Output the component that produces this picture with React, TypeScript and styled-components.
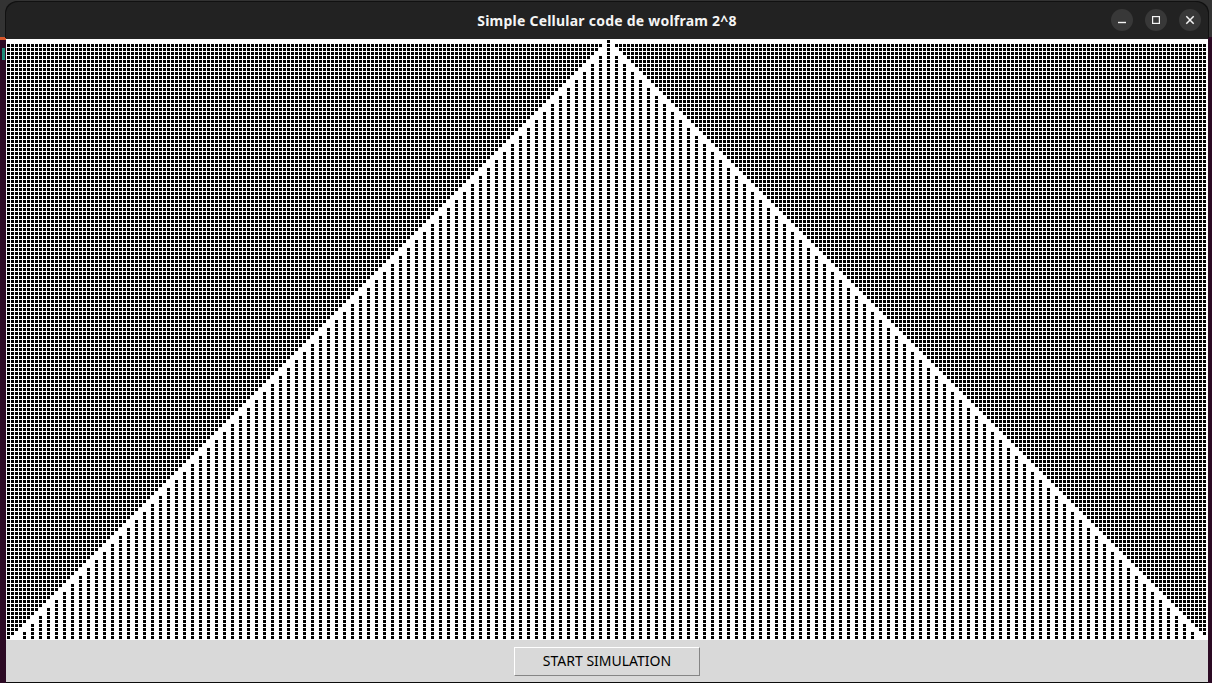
import { useMemo } from 'react'
import styled, { createGlobalStyle } from 'styled-components'

const COLS = 300
const ROWS = 150
const CENTER = 150
const PITCH = 4
const CELL = 3

const GlobalStyle = createGlobalStyle`
  html,
  body {
    width: 1212px;
    height: 683px;
    margin: 0;
    overflow: hidden;
    background: #2c0a24;
  }
`

const Desktop = styled.div`
  display: flex;
  width: 1212px;
  height: 683px;
`

const Wallpaper = styled.div<{ $width: number }>`
  display: flex;
  flex-direction: column;
  flex: 0 0 ${({ $width }) => `${$width}px`};
`

const WallpaperTop = styled.div`
  height: 37px;
  background: #333333;
`

const DockAccent = styled.div`
  height: 3px;
  background: #d6562b;
`

const DockIcon = styled.div`
  width: 3px;
  height: 12px;
  margin: 8px 0 0 2px;
  background: #1d8a78;
`

const Window = styled.main`
  display: flex;
  flex-direction: column;
  flex: 0 0 1202px;
  height: 683px;
  border-bottom: 1px solid #0c0c0c;
  box-sizing: border-box;
  background: linear-gradient(#333333 0 39px, transparent 39px);
`

const TitleBar = styled.header`
  position: relative;
  display: flex;
  align-items: center;
  justify-content: center;
  flex: 0 0 37px;
  margin-top: 2px;
  border-radius: 12px 12px 0 0;
  background: #222222;
  box-shadow:
    -1px -1px 0 #111111,
    1px -1px 0 #111111;
`

const Title = styled.h1`
  margin: 0;
  color: #f4f4f4;
  font-family: 'Noto Sans', sans-serif;
  font-size: 14px;
  font-weight: 700;
  line-height: 20px;
  letter-spacing: 0.23px;
`

const Controls = styled.div`
  position: absolute;
  top: 7px;
  right: 7px;
  display: flex;
  gap: 12px;
`

const ControlButton = styled.button`
  display: flex;
  align-items: center;
  justify-content: center;
  width: 22px;
  height: 22px;
  padding: 0;
  border: none;
  border-radius: 50%;
  background: #383838;
  color: #f4f4f4;
`

const Board = styled.section`
  flex: 0 0 601px;
  box-sizing: border-box;
  padding: 1px 1px 0;
  background: #ffffff;
`

const Grid = styled.svg`
  display: block;
`

const Footer = styled.footer`
  display: flex;
  justify-content: center;
  flex: 1;
  padding-top: 7px;
  box-sizing: border-box;
  background: #d9d9d9;
`

const StartButton = styled.button`
  width: 186px;
  height: 29px;
  padding: 0 0 2px;
  box-sizing: border-box;
  border: 1px solid;
  border-color: #ffffff #858585 #858585 #ffffff;
  background: #d9d9d9;
  color: #000000;
  font-family: 'Noto Sans', sans-serif;
  font-size: 14px;
`

function isBlack(row: number, col: number) {
  const dx = Math.abs(col - CENTER)
  if (dx === 0) return true
  if (row === 0) return false
  if (dx > row) return true
  return dx % 2 === 0 && dx <= row - 2
}

function buildCells() {
  let d = ''
  for (let row = 0; row < ROWS; row++) {
    for (let col = 0; col < COLS; col++) {
      if (isBlack(row, col)) {
        d += `M${col * PITCH} ${row * PITCH}h${CELL}v${CELL}h-${CELL}z`
      }
    }
  }
  return d
}

function App() {
  const cells = useMemo(buildCells, [])

  return (
    <>
      <GlobalStyle />
      <Desktop>
        <Wallpaper $width={6}>
          <WallpaperTop />
          <DockAccent />
          <DockIcon />
        </Wallpaper>
        <Window>
          <TitleBar>
            <Title>Simple Cellular code de wolfram 2^8</Title>
            <Controls>
              <ControlButton aria-label="Minimize">
                <svg width="10" height="10" viewBox="0 0 10 10">
                  <path d="M1 7.5h8" stroke="currentColor" strokeWidth="1.4" />
                </svg>
              </ControlButton>
              <ControlButton aria-label="Maximize">
                <svg width="10" height="10" viewBox="0 0 10 10">
                  <rect x="1.6" y="1.6" width="6.8" height="6.8" fill="none" stroke="currentColor" strokeWidth="1.2" />
                </svg>
              </ControlButton>
              <ControlButton aria-label="Close">
                <svg width="10" height="10" viewBox="0 0 10 10">
                  <path d="M1.3 1.3l7.4 7.4M8.7 1.3l-7.4 7.4" stroke="currentColor" strokeWidth="1.5" />
                </svg>
              </ControlButton>
            </Controls>
          </TitleBar>
          <Board>
            <Grid width={COLS * PITCH} height={ROWS * PITCH} shapeRendering="crispEdges">
              <path d={cells} fill="#000000" />
            </Grid>
          </Board>
          <Footer>
            <StartButton>START SIMULATION</StartButton>
          </Footer>
        </Window>
        <Wallpaper $width={4}>
          <WallpaperTop />
        </Wallpaper>
      </Desktop>
    </>
  )
}

export default App
